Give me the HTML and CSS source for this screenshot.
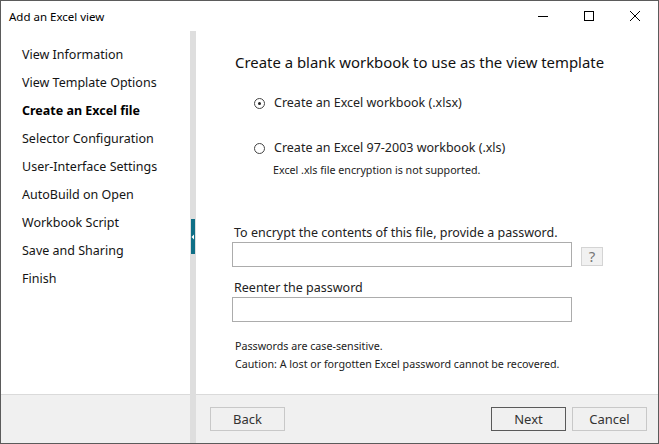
FILE: index.html
```html
<!DOCTYPE html>
<html lang="en">
<head>
<meta charset="utf-8">
<title>Add an Excel view</title>
<link rel="stylesheet" href="styles.css">
</head>
<body>
<div class="window">
  <header class="titlebar">
    <span class="title">Add an Excel view</span>
    <div class="controls">
      <button class="ctl" aria-label="Minimize">
        <svg width="10" height="10" viewBox="0 0 10 10"><path d="M0 5.5H10" stroke="#000" stroke-width="1"/></svg>
      </button>
      <button class="ctl" aria-label="Maximize">
        <svg width="10" height="10" viewBox="0 0 10 10"><rect x="0.5" y="0.5" width="9" height="9" fill="none" stroke="#000" stroke-width="1"/></svg>
      </button>
      <button class="ctl" aria-label="Close">
        <svg width="10" height="10" viewBox="0 0 10 10"><path d="M0 0L10 10M10 0L0 10" stroke="#000" stroke-width="1"/></svg>
      </button>
    </div>
  </header>

  <div class="layout">
    <nav class="steps">
      <a class="step">View Information</a>
      <a class="step">View Template Options</a>
      <a class="step current">Create an Excel file</a>
      <a class="step">Selector Configuration</a>
      <a class="step">User-Interface Settings</a>
      <a class="step">AutoBuild on Open</a>
      <a class="step">Workbook Script</a>
      <a class="step">Save and Sharing</a>
      <a class="step">Finish</a>
    </nav>

    <div class="splitter">
      <div class="grip">
        <svg width="4" height="6" viewBox="0 0 4 6"><path d="M3 0.5V5.5L0.5 3Z" fill="#fff"/></svg>
      </div>
    </div>

    <main class="page">
      <h1 class="heading">Create a blank workbook to use as the view template</h1>

      <label class="option first">
        <span class="radio checked"></span>
        <span>Create an Excel workbook (.xlsx)</span>
      </label>

      <label class="option second">
        <span class="radio"></span>
        <span>Create an Excel 97-2003 workbook (.xls)</span>
      </label>
      <p class="note indent">Excel .xls file encryption is not supported.</p>

      <div class="field pw1">
        <span class="field-label">To encrypt the contents of this file, provide a password.</span>
        <div class="field-row">
          <input class="textbox" type="password">
          <button class="help">?</button>
        </div>
      </div>

      <div class="field pw2">
        <span class="field-label">Reenter the password</span>
        <div class="field-row">
          <input class="textbox" type="password">
        </div>
      </div>

      <p class="note hint">Passwords are case-sensitive.</p>
      <p class="note">Caution: A lost or forgotten Excel password cannot be recovered.</p>
    </main>

    <footer class="foot foot-left"></footer>
    <footer class="foot foot-right">
      <button class="btn">Back</button>
      <div class="spacer"></div>
      <button class="btn default">Next</button>
      <button class="btn">Cancel</button>
    </footer>
  </div>
</div>
</body>
</html>
```

FILE: styles.css
```css
* { box-sizing: border-box; }

html, body {
  margin: 0;
  padding: 0;
  background: #fff;
}

body {
  font-family: "Noto Sans", "Open Sans", sans-serif;
  color: #1a1a1a;
}

.window {
  width: 659px;
  height: 444px;
  border: 1px solid #5b5b5b;
  display: flex;
  flex-direction: column;
  background: #fff;
}

/* title bar */
.titlebar {
  height: 30px;
  display: flex;
  align-items: center;
  flex: none;
}

.title {
  padding-left: 8px;
  font-size: 11.5px;
  color: #000;
  flex: 1;
}

.controls {
  display: flex;
  height: 30px;
}

.ctl {
  width: 46px;
  height: 30px;
  border: 0;
  background: transparent;
  padding: 0;
  display: flex;
  align-items: center;
  justify-content: center;
}

/* body grid: nav | splitter | page, footer row underneath */
.layout {
  flex: 1;
  display: grid;
  grid-template-columns: 189px 6px 1fr;
  grid-template-rows: 1fr 49px;
}

.steps {
  grid-column: 1;
  grid-row: 1;
  display: flex;
  flex-direction: column;
  padding: 10px 0 0 21px;
}

.step {
  height: 28px;
  line-height: 28px;
  font-size: 12.5px;
  color: #141414;
  white-space: nowrap;
}

.step.current {
  font-weight: bold;
  color: #000;
}

.splitter {
  grid-column: 2;
  grid-row: 1 / 3;
  background: #dedede;
  position: relative;
}

.grip {
  position: absolute;
  left: 1px;
  top: 188px;
  width: 4px;
  height: 35px;
  background: #0f6f86;
  display: flex;
  align-items: center;
  justify-content: center;
}

/* wizard page */
.page {
  grid-column: 3;
  grid-row: 1;
  padding: 19px 0 0 39px;
  display: flex;
  flex-direction: column;
}

.heading {
  margin: 0;
  font-size: 14.9px;
  font-weight: normal;
  line-height: 24px;
  color: #111;
}

.option {
  display: flex;
  align-items: center;
  gap: 9px;
  padding-left: 19px;
  font-size: 12.5px;
  line-height: 18px;
  color: #222;
}

.option.first { margin-top: 20px; }
.option.second { margin-top: 27px; }

.radio {
  width: 11px;
  height: 11px;
  border: 1px solid #444;
  border-radius: 50%;
  display: flex;
  align-items: center;
  justify-content: center;
  flex: none;
}

.radio.checked::after {
  content: "";
  width: 3px;
  height: 3px;
  border-radius: 50%;
  background: #222;
}

.note {
  margin: 0;
  font-size: 10.7px;
  line-height: 18px;
  color: #222;
}

.note.indent {
  padding-left: 38px;
  margin-top: 4px;
}

.field {
  display: flex;
  flex-direction: column;
  margin-left: -3px;
}

.field.pw1 { margin-top: 45px; }
.field.pw2 { margin-top: 12px; }

.field-label {
  font-size: 12.5px;
  line-height: 17px;
  color: #222;
  padding-left: 2px;
}

.field-row {
  display: flex;
  align-items: flex-start;
  gap: 9px;
  margin-top: 1px;
}

.textbox {
  width: 340px;
  height: 25px;
  border: 1px solid #acacac;
  background: #fff;
  margin: 0;
}

.help {
  width: 22px;
  height: 19px;
  margin-top: 5px;
  border: 1px solid #d4d4d4;
  background: #f1f1f1;
  color: #777;
  font-family: inherit;
  font-size: 15px;
  padding: 0;
  line-height: 17px;
}

.note.hint { margin-top: 15px; }

/* footer */
.foot {
  grid-row: 2;
  background: #f0f0f0;
  border-top: 1px solid #dadada;
}

.foot-left { grid-column: 1; }

.foot-right {
  grid-column: 3;
  display: flex;
  align-items: flex-start;
  padding: 12px 11px 0 14px;
  gap: 6px;
}

.spacer { flex: 1; }

.btn {
  width: 75px;
  height: 24px;
  border: 1px solid #c8c8c8;
  background: #f0f0f0;
  font-family: inherit;
  font-size: 13px;
  color: #333;
  padding: 0;
}

.btn.default {
  border: 1px solid #5a5a5a;
}
```
